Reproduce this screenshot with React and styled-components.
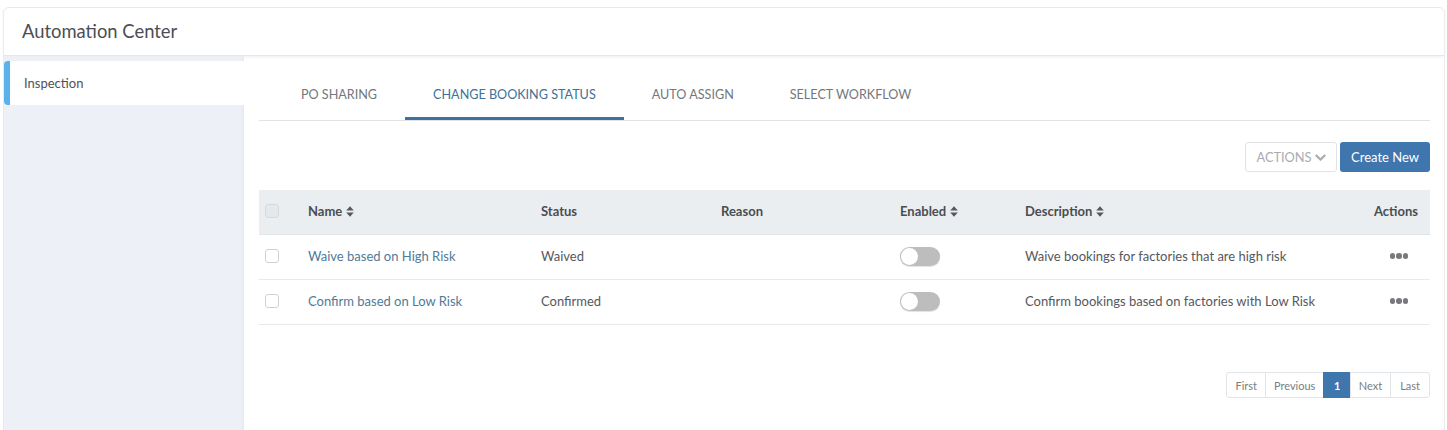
import { useState } from "react";
import styled, { createGlobalStyle } from "styled-components";

const GlobalStyle = createGlobalStyle`
  html, body {
    margin: 0;
    padding: 0;
    background: #fff;
    overflow: hidden;
  }
  body {
    font-family: Lato, "Open Sans", "Liberation Sans", sans-serif;
    color: #4a4d52;
  }
`;

const tabs = ["PO SHARING", "CHANGE BOOKING STATUS", "AUTO ASSIGN", "SELECT WORKFLOW"];

const rules = [
  {
    name: "Waive based on High Risk",
    status: "Waived",
    description: "Waive bookings for factories that are high risk",
  },
  {
    name: "Confirm based on Low Risk",
    status: "Confirmed",
    description: "Confirm bookings based on factories with Low Risk",
  },
];

const pages = ["First", "Previous", "1", "Next", "Last"];

function SortIcon() {
  return (
    <SortSvg viewBox="0 0 8 11" aria-hidden="true">
      <path d="M4 0.2 7.8 4.6H0.2Z" fill="currentColor" />
      <path d="M4 10.8 0.2 6.4H7.8Z" fill="currentColor" />
    </SortSvg>
  );
}

export default function App() {
  const [active] = useState(1);

  return (
    <Page>
      <GlobalStyle />
      <Card>
        <Header>Automation Center</Header>
        <Body>
          <Sidebar>
            <SideItem>Inspection</SideItem>
          </Sidebar>
          <Main>
            <Tabs>
              {tabs.map((tab, index) => (
                <Tab key={tab} $active={index === active}>
                  {tab}
                </Tab>
              ))}
            </Tabs>
            <Toolbar>
              <ActionsButton>
                ACTIONS
                <svg width="11" height="7" viewBox="0 0 11 7" aria-hidden="true">
                  <path d="M0.8 1 5.5 5.6 10.2 1" fill="none" stroke="currentColor" strokeWidth="2.2" />
                </svg>
              </ActionsButton>
              <CreateButton>Create New</CreateButton>
            </Toolbar>
            <HeadRow>
              <CheckCell>
                <Check $head />
              </CheckCell>
              <HeadCell>
                Name <SortIcon />
              </HeadCell>
              <HeadCell>Status</HeadCell>
              <HeadCell>Reason</HeadCell>
              <HeadCell>
                Enabled <SortIcon />
              </HeadCell>
              <HeadCell>
                Description <SortIcon />
              </HeadCell>
              <ActionsHead>Actions</ActionsHead>
            </HeadRow>
            {rules.map((rule) => (
              <Row key={rule.name}>
                <CheckCell>
                  <Check />
                </CheckCell>
                <NameLink>{rule.name}</NameLink>
                <span>{rule.status}</span>
                <span />
                <span>
                  <Toggle />
                </span>
                <span>{rule.description}</span>
                <Dots>
                  <i />
                  <i />
                  <i />
                </Dots>
              </Row>
            ))}
            <Pagination>
              {pages.map((page) => (
                <PageButton key={page} $active={page === "1"}>
                  {page}
                </PageButton>
              ))}
            </Pagination>
          </Main>
        </Body>
      </Card>
    </Page>
  );
}

const Page = styled.div`
  width: 1447px;
  height: 430px;
  padding: 7px 2px 0 3px;
  box-sizing: border-box;
  overflow: hidden;
`;
const Card = styled.div`
  height: 440px;
  border: 1px solid #e8eaee;
  border-radius: 6px;
  background: #fff;
`;
const Header = styled.div`
  position: relative;
  height: 48px;
  padding: 0 0 2px 18px;
  box-sizing: border-box;
  display: flex;
  align-items: center;
  border-bottom: 1px solid #e4e6ea;
  box-shadow: 0 1px 3px #eceef1;
  font-size: 18.4px;
  color: #4b4e53;
`;
const Body = styled.div`
  display: flex;
  height: 392px;
`;
const Sidebar = styled.div`
  width: 240px;
  flex-shrink: 0;
  padding-top: 5px;
  background: #eef0f8;
  box-shadow: inset -3px 0 3px -2px #e3e5ee;
`;
const SideItem = styled.div`
  height: 44px;
  padding-left: 14px;
  display: flex;
  align-items: center;
  background: #fff;
  border-left: 6px solid #5bb1ea;
  border-radius: 4px 0 0 4px;
  font-size: 13px;
  color: #4f5257;
`;
const Main = styled.div`
  flex: 1;
  padding: 12px 14px 0 15px;
  font-size: 13px;
  color: #55585d;
`;
const Tabs = styled.div`
  display: flex;
  height: 52px;
  padding-left: 14px;
  border-bottom: 1px solid #dfe2e6;
`;
const Tab = styled.div`
  height: 52px;
  padding: 0 28px;
  display: flex;
  align-items: center;
  box-sizing: border-box;
  font-size: 12.6px;
  color: ${(p) => (p.$active ? "#3d7199" : "#74777c")};
  border-bottom: ${(p) => (p.$active ? "3px solid #3d7199" : "none")};
  padding-top: ${(p) => (p.$active ? "3px" : "0")};
`;
const Toolbar = styled.div`
  display: flex;
  justify-content: flex-end;
  gap: 3px;
  margin-top: 21px;
  margin-bottom: 18px;
`;
const ActionsButton = styled.button`
  width: 92px;
  height: 30px;
  display: flex;
  align-items: center;
  justify-content: center;
  gap: 3px;
  padding: 0;
  background: #fff;
  border: 1px solid #e0e2e6;
  border-radius: 3px;
  font: inherit;
  font-size: 12.8px;
  color: #a9acb1;
`;
const CreateButton = styled.button`
  width: 90px;
  height: 30px;
  padding: 0;
  background: #3f76ae;
  border: none;
  border-radius: 3px;
  font: inherit;
  color: #fff;
`;
const columns = "48px 233px 180px 179px 125px 1fr 60px";
const HeadRow = styled.div`
  display: grid;
  grid-template-columns: ${columns};
  align-items: center;
  height: 42px;
  padding-bottom: 2px;
  background: #ebeef0;
  border-bottom: 1px solid #e2e5e8;
  font-weight: 700;
  color: #4a4d52;
`;
const HeadCell = styled.div`
  display: flex;
  align-items: center;
  gap: 4px;
  padding-left: 1px;
`;
const ActionsHead = styled.div`
  text-align: right;
  padding-right: 12px;
`;
const SortSvg = styled.svg`
  width: 8px;
  height: 11px;
  color: #55585d;
`;
const CheckCell = styled.div`
  display: flex;
  padding-left: 6px;
`;
const Check = styled.div`
  width: 12px;
  height: 12px;
  border: 1px solid ${(p) => (p.$head ? "#d6d9dc" : "#cfd2d5")};
  border-radius: 3px;
  background: ${(p) => (p.$head ? "#e6e9eb" : "#fff")};
`;
const Row = styled.div`
  display: grid;
  grid-template-columns: ${columns};
  align-items: center;
  height: 42px;
  padding-bottom: 2px;
  border-bottom: 1px solid #e8eaed;
  & > span {
    padding-left: 1px;
  }
`;
const NameLink = styled.a`
  color: #4f7a9a;
  padding-left: 1px;
`;
const Toggle = styled.div`
  position: relative;
  width: 40px;
  height: 19px;
  border-radius: 10px;
  background: #bdbdbd;
  box-shadow: 0 1px 1px #e3e3e3;
  &::after {
    content: "";
    position: absolute;
    left: 1px;
    top: 1px;
    width: 17px;
    height: 17px;
    border-radius: 50%;
    background: #fff;
  }
`;
const Dots = styled.div`
  display: flex;
  justify-content: flex-end;
  gap: 1px;
  padding-right: 22px;
  i {
    width: 5.5px;
    height: 5.5px;
    border-radius: 50%;
    background: #77797c;
  }
`;
const Pagination = styled.div`
  display: flex;
  justify-content: flex-end;
  margin-top: 47px;
`;
const PageButton = styled.div`
  height: 26px;
  padding: 0 ${(p) => (p.$active ? "9.5px" : "8px")};
  display: flex;
  align-items: center;
  box-sizing: border-box;
  margin-left: -1px;
  border: 1px solid ${(p) => (p.$active ? "#3f76ae" : "#e2e4e7")};
  background: ${(p) => (p.$active ? "#3f76ae" : "#fff")};
  color: ${(p) => (p.$active ? "#fff" : "#7a7d82")};
  font-size: 11px;
  font-weight: ${(p) => (p.$active ? 700 : 400)};
  &:first-child {
    border-radius: 3px 0 0 3px;
  }
  &:last-child {
    padding: 0 9px;
    border-radius: 0 3px 3px 0;
  }
`;
